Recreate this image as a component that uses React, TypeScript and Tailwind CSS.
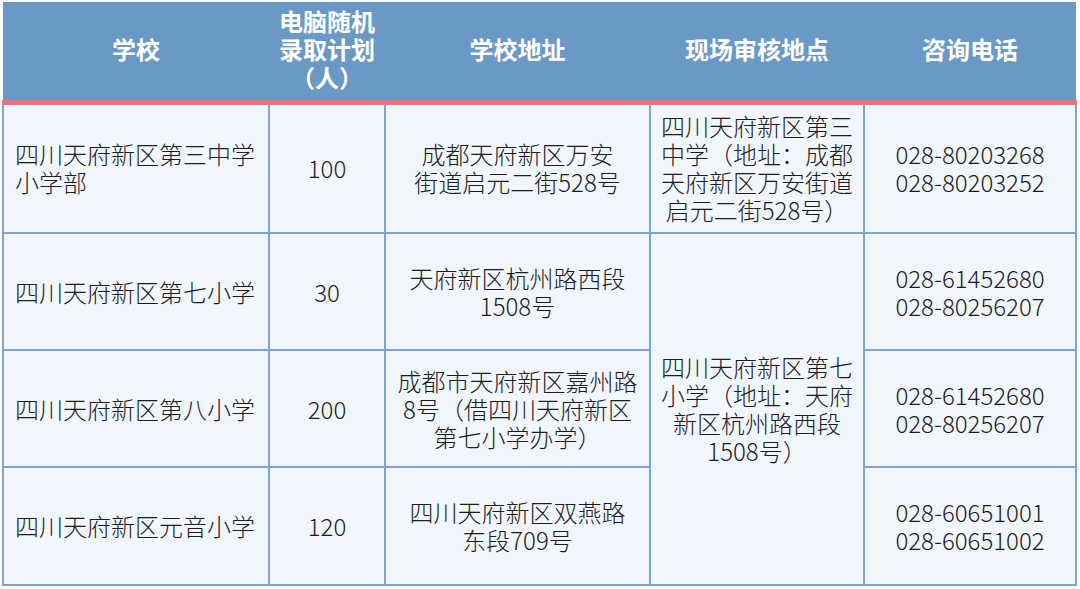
import React from "react";

const font = { fontFamily: '"Noto Sans CJK SC", "Noto Sans", sans-serif' };

const td = "border-2 border-[#7fa4d2] bg-[#f1f6fc] text-[24px] leading-[28px] text-[#1c1c1c] font-light align-middle";

export default function App() {
  return (
    <div className="w-[1080px] h-[589px] bg-white p-[2px]" style={font}>
      <table className="table-fixed border-collapse w-[1073px]">
        <colgroup>
          <col className="w-[266px]" />
          <col className="w-[116px]" />
          <col className="w-[265px]" />
          <col className="w-[214px]" />
          <col className="w-[212px]" />
        </colgroup>
        <thead>
          <tr className="h-[100px]">
            {["学校", null, "学校地址", "现场审核地点", "咨询电话"].map((h, i) => (
              <th
                key={i}
                className="bg-[#6b99c6] text-white font-bold text-[24px] leading-[28px] border-b-[5px] border-b-[#e9737b] p-0 pb-[4px] align-middle text-center"
              >
                {h === null ? (
                  <>
                    电脑随机
                    <br />
                    录取计划
                    <br />
                    （人）
                  </>
                ) : (
                  h
                )}
              </th>
            ))}
          </tr>
        </thead>
        <tbody>
          <tr className="h-[131px]">
            <td className={`${td} text-left pl-[11px] pr-1`}>
              四川天府新区第三中学
              <br />
              小学部
            </td>
            <td className={`${td} text-center`}>100</td>
            <td className={`${td} text-center`}>
              成都天府新区万安
              <br />
              街道启元二街528号
            </td>
            <td className={`${td} text-center px-[9px]`}>
              四川天府新区第三中学（地址：成都天府新区万安街道启元二街528号）
            </td>
            <td className={`${td} text-center`}>
              028-80203268
              <br />
              028-80203252
            </td>
          </tr>
          <tr className="h-[117px]">
            <td className={`${td} text-left pl-[11px] pr-1`}>四川天府新区第七小学</td>
            <td className={`${td} text-center`}>30</td>
            <td className={`${td} text-center`}>
              天府新区杭州路西段
              <br />
              1508号
            </td>
            <td className={`${td} text-center px-[9px]`} rowSpan={3}>
              四川天府新区第七小学（地址：天府新区杭州路西段1508号）
            </td>
            <td className={`${td} text-center`}>
              028-61452680
              <br />
              028-80256207
            </td>
          </tr>
          <tr className="h-[117px]">
            <td className={`${td} text-left pl-[11px] pr-1`}>四川天府新区第八小学</td>
            <td className={`${td} text-center`}>200</td>
            <td className={`${td} text-center`}>
              成都市天府新区嘉州路
              <br />
              8号（借四川天府新区
              <br />
              第七小学办学）
            </td>
            <td className={`${td} text-center`}>
              028-61452680
              <br />
              028-80256207
            </td>
          </tr>
          <tr className="h-[118px]">
            <td className={`${td} text-left pl-[11px] pr-1`}>四川天府新区元音小学</td>
            <td className={`${td} text-center`}>120</td>
            <td className={`${td} text-center`}>
              四川天府新区双燕路
              <br />
              东段709号
            </td>
            <td className={`${td} text-center`}>
              028-60651001
              <br />
              028-60651002
            </td>
          </tr>
        </tbody>
      </table>
    </div>
  );
}
